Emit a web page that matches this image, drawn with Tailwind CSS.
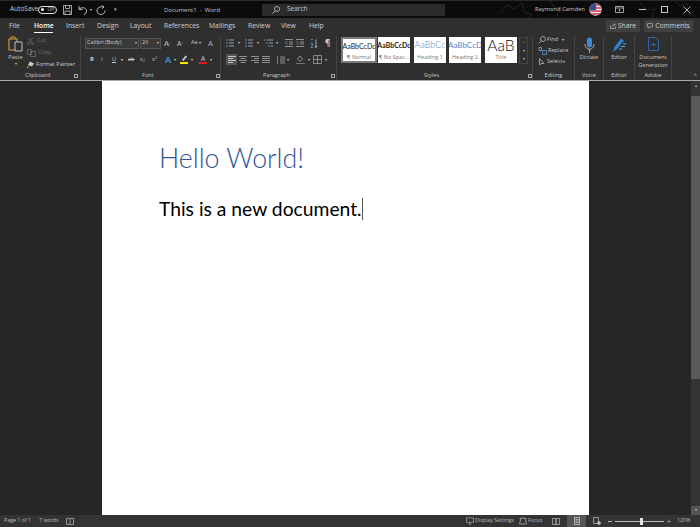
<!DOCTYPE html>
<html lang="en">
<head>
<meta charset="UTF-8">
<title>Document1 - Word</title>
<script src="https://cdn.jsdelivr.net/npm/@tailwindcss/browser@4"></script>
</head>
<body class="w-[700px] h-[527px] overflow-hidden bg-[#262626] font-['Open_Sans',sans-serif] text-[6.5px] leading-none text-[#c8c8c8]">
<div class="flex flex-col h-[527px]">

  <!-- Title bar -->
  <div class="relative isolate flex items-center h-[18px] bg-[#0b0b0b] border-t border-[#2a2a2a] shrink-0">
    <svg class="absolute -z-10 left-[490px] top-0" width="210" height="18" viewBox="0 0 210 18" fill="none" stroke="#242424" stroke-width="1"><path d="M10 12l8-8 6 4 8-6 2 9 8 3-6 6M60 0l4 6 8 1-5 6 1 5M150 2l6 7 9-1-3 8 4 2M185 0l5 5 8-2-2 8 9 5"/></svg>
    <span class="ml-[10px] w-[28px]">AutoSave</span>
    <div class="flex items-center justify-end w-[19px] h-[8px] rounded-full border border-[#e0e0e0] pr-[1px] gap-[1px]">
      <span class="w-[3px] h-[3px] rounded-full bg-white mr-[2px]"></span><span class="text-[4.5px] mr-[1px]">Off</span>
    </div>
    <svg class="ml-[6px]" width="9" height="10" viewBox="0 0 9 10" fill="none" stroke="#c8c8c8" stroke-width=".8"><path d="M.5.500h8v9h-8zM2.500.5v3h4v-3M2 9.500v-3.500h5v3.500"/></svg>
    <svg class="ml-[6px]" width="10" height="10" viewBox="0 0 10 10" fill="none" stroke="#c8c8c8" stroke-width=".9"><path d="M1 1v3.500h3.500M1.200 4.300c2-2.500 6.800-2 7.300 1.200.3 2-1 3.500-2.500 4"/></svg>
    <span class="ml-[2px] text-[4px]">▾</span>
    <svg class="ml-[4px]" width="10" height="10" viewBox="0 0 10 10" fill="none" stroke="#c8c8c8" stroke-width=".9"><path d="M6 .5l2 1.500-2 1.500M8 2C4 1 1 3 1 5.500 1 8 3 9.500 5 9.500S9 8 9 5.500"/></svg>
    <span class="ml-[8px] text-[5px]">▾</span>
    <span class="ml-[47px] w-[98px] text-[6px]">Document1 &nbsp;-&nbsp; Word</span>
    <div class="flex items-center h-[12px] w-[183px] bg-[#2b2b2b]">
      <svg class="ml-[10px]" width="8" height="8" viewBox="0 0 8 8" fill="none" stroke="#c8c8c8" stroke-width=".8"><circle cx="5" cy="3" r="2.500"/><path d="M3.200 4.800L.5 7.500"/></svg>
      <span class="ml-[7px]">Search</span>
    </div>
    <span class="ml-[90px] w-[54px] text-[5.800px] whitespace-nowrap">Raymond Camden</span>
    <svg width="13" height="13" viewBox="0 0 13 13"><defs><clipPath id="fc"><circle cx="6.500" cy="6.500" r="6.200"/></clipPath></defs><g clip-path="url(#fc)"><rect width="13" height="13" fill="#e9e9ee"/><path d="M0 2h13M0 5h13M0 8h13M0 11h13" stroke="#c8384a" stroke-width="1.300"/><rect width="7" height="7" fill="#34508f"/></g></svg>
    <svg class="ml-[13px]" width="9" height="7" viewBox="0 0 9 7" fill="none" stroke="#c8c8c8" stroke-width=".8"><path d="M.5.500h8v6h-8zM.5 2h8"/><path d="M4.500 5.500v-2M3.500 4.300l1-1 1 1"/></svg>
    <span class="ml-[15px] w-[7px] h-px bg-[#c8c8c8]"></span>
    <span class="ml-[15px] w-[7px] h-[7px] border border-[#c8c8c8]"></span>
    <svg class="ml-[15px]" width="8" height="8" viewBox="0 0 8 8" stroke="#d8d8d8" stroke-width=".8"><path d="M.5.500l7 7M7.500.500l-7 7"/></svg>
  </div>

  <!-- Tabs -->
  <div class="flex items-center h-[16px] bg-[#2f2f2f] shrink-0 relative text-[#d0d0d0] text-[6.800px]">
    <span class="ml-[9px] w-[25px]">File</span>
    <span class="relative w-[32px] text-white font-semibold">Home<span class="absolute left-0 top-[9px] w-[19px] h-[1px] bg-white"></span></span>
    <span class="w-[31px]">Insert</span>
    <span class="w-[33px]">Design</span>
    <span class="w-[34px]">Layout</span>
    <span class="w-[45px]">References</span>
    <span class="w-[39px]">Mailings</span>
    <span class="w-[33px]">Review</span>
    <span class="w-[28px]">View</span>
    <span class="w-[297px]">Help</span>
    <div class="flex items-center justify-center gap-[2px] w-[34px] h-[12px] bg-[#404040] rounded-[1px]">
      <svg width="6" height="6" viewBox="0 0 6 6" fill="none" stroke="#c8c8c8" stroke-width=".6"><path d="M.5 2.500v3h5v-2M2 4c.3-1.500 1.500-2.500 3-2.500M4 .5l1.300 1-1 1.200"/></svg>Share
    </div>
    <div class="flex items-center justify-center gap-[2px] w-[49px] h-[12px] ml-[4px] bg-[#404040] rounded-[1px]">
      <svg width="6" height="6" viewBox="0 0 6 6" fill="none" stroke="#c8c8c8" stroke-width=".6"><path d="M.5.500h5v3.500h-3l-1 1.200v-1.200h-1z"/></svg>Comments
    </div>
  </div>

  <!-- Ribbon -->
  <div class="flex h-[47px] bg-[#2f2f2f] border-b border-[#a8a8a8] pt-[2px] shrink-0 text-[5.600px]">

    <!-- Clipboard -->
    <div class="flex flex-col w-[81px] border-r border-[#444] pl-[8px]">
      <div class="flex h-[33px]">
        <div class="flex flex-col items-center w-[15px]">
          <svg width="15" height="16" viewBox="0 0 15 16" fill="none"><path d="M1 3h8v11H1z" stroke="#d99a3c" stroke-width="1.100"/><path d="M3 3V1h4v2" stroke="#d99a3c"/><path d="M7 6h7v9H7z" fill="#2f2f2f" stroke="#cfcfcf" stroke-width=".9"/></svg>
          <span class="mt-[3px]">Paste</span>
          <span class="text-[4px] mt-[1px]">▾</span>
        </div>
        <div class="flex flex-col ml-[4px] gap-[3px] pt-[1px]">
          <div class="flex items-center gap-[3px] h-[8px] text-[#6e6e6e]"><svg width="7" height="8" viewBox="0 0 7 8" fill="none" stroke="#777" stroke-width=".7"><path d="M1 .5l4 5M6 .5l-4 5"/><circle cx="1.500" cy="6.500" r="1"/><circle cx="5.500" cy="6.500" r="1"/></svg>Cut</div>
          <div class="flex items-center gap-[2px] h-[8px] mt-[1px] text-[#6e6e6e]"><svg width="9" height="8" viewBox="0 0 9 8" fill="none" stroke="#777" stroke-width=".7"><path d="M.5.500h4v5h-4zM3.500 2.500h5v5h-5z"/></svg>Copy</div>
          <div class="flex items-center gap-[1px] h-[9px] text-[#d0d0d0] whitespace-nowrap"><svg width="8" height="8" viewBox="0 0 8 8"><path d="M3 .5l4 2-2 3-4-1.500z" fill="#c8c8c8"/><path d="M1.500 4.500L.5 7.500" stroke="#d99a3c"/></svg>Format Painter</div>
        </div>
      </div>
      <div class="flex items-center h-[9px] mt-auto pl-[17px]"><span class="w-[49px]">Clipboard</span><span class="w-[4px] h-[4px] border border-[#aaa]"></span></div>
    </div>

    <!-- Font -->
    <div class="flex flex-col w-[140px] border-r border-[#444] pl-[4px]">
      <div class="flex items-center h-[14px] gap-[1px]">
        <div class="flex items-center justify-between w-[54px] h-[11px] bg-[#3a3a3a] border border-[#555] px-[1px]">Calibri (Body)<span class="text-[4px]">▾</span></div>
        <div class="flex items-center justify-between w-[21px] h-[11px] bg-[#3a3a3a] border border-[#555] px-[1px]">26<span class="text-[4px]">▾</span></div>
        <span class="ml-[2px] w-[11px] text-[8px] text-[#c8c8c8]">A<sup class="text-[3px] text-[#5b9bd5]">^</sup></span>
        <span class="ml-[1px] w-[10px] text-[7px]">A<sup class="text-[3px] text-[#5b9bd5]">˅</sup></span>
        <span class="ml-[3px] w-[14px]">Aa <span class="text-[4px]">▾</span></span>
        <span class="ml-[2px] text-[8px] text-[#b7a3c9]">A</span>
      </div>
      <div class="flex items-center h-[19px] pl-[5px] text-[#c8c8c8] font-bold">
        <span class="w-[11px]">B</span>
        <span class="w-[11px] italic font-normal">I</span>
        <span class="w-[9px] underline font-normal">U</span>
        <span class="w-[7px] text-[4px]">▾</span>
        <span class="w-[12px] line-through font-normal">ab</span>
        <span class="w-[12px] font-normal">x<sub class="text-[3.500px]">2</sub></span>
        <span class="w-[13px] font-normal">x<sup class="text-[3.500px]">2</sup></span>
        <span class="w-[9px] text-[9px] text-[#3f86d3]">A</span>
        <span class="w-[6px] text-[4px] font-normal">▾</span>
        <span class="flex flex-col items-center w-[8px] mr-[3px]"><svg width="8" height="7" viewBox="0 0 8 7"><path d="M2 5l3.500-4.500 1.500 1L3.500 6z" fill="#c8c8c8"/></svg><span class="w-[8px] h-[2px] bg-[#f2e500]"></span></span>
        <span class="w-[8px] text-[4px] font-normal">▾</span>
        <span class="flex flex-col items-center w-[8px] mr-[3px]"><span class="text-[7px] font-normal h-[7px]">A</span><span class="w-[8px] h-[2px] bg-[#e31b1b]"></span></span>
        <span class="text-[4px] font-normal">▾</span>
      </div>
      <div class="flex items-center h-[9px] mt-auto pl-[57px]"><span class="w-[74px]">Font</span><span class="w-[4px] h-[4px] border border-[#aaa]"></span></div>
    </div>

    <!-- Paragraph -->
    <div class="flex flex-col w-[116px] border-r border-[#444] pl-[5px]">
      <div class="flex items-center h-[14px] text-[4px]">
        <svg width="8" height="8" viewBox="0 0 8 8" stroke="#5b9bd5" stroke-width=".9"><path d="M0 1h2M0 4h2M0 7h2"/><path d="M3 1h5M3 4h5M3 7h5" stroke="#aaa"/></svg><span class="ml-[4px] w-[7px]">▾</span>
        <svg width="8" height="8" viewBox="0 0 8 8" stroke="#5b9bd5" stroke-width=".9"><path d="M0 1h2M0 4h2M0 7h2"/><path d="M3 1h5M3 4h5M3 7h5" stroke="#aaa"/></svg><span class="ml-[4px] w-[7px]">▾</span>
        <svg width="9" height="8" viewBox="0 0 9 8" stroke="#5b9bd5" stroke-width=".9"><path d="M0 1h2M2 4h2M4 7h2"/><path d="M3 1h6M5 4h4M7 7h2" stroke="#aaa"/></svg><span class="ml-[3px] w-[9px]">▾</span>
        <svg width="8" height="8" viewBox="0 0 8 8" fill="none" stroke="#aaa" stroke-width=".8"><path d="M0 .5h8M4 3h4M4 5h4M0 7.500h8"/><path d="M2.500 2.500L.5 4l2 1.500" stroke="#5b9bd5"/></svg>
        <svg class="ml-[3px]" width="8" height="8" viewBox="0 0 8 8" fill="none" stroke="#aaa" stroke-width=".8"><path d="M0 .5h8M4 3h4M4 5h4M0 7.500h8"/><path d="M.5 2.500L2.500 4l-2 1.500" stroke="#5b9bd5"/></svg>
        <svg class="ml-[5px]" width="9" height="9" viewBox="0 0 9 9" fill="none" stroke="#5b9bd5" stroke-width=".8"><path d="M2 .5h2M2 4h2M2 5.500h2L2 8.500h2"/><path d="M7 .5v8M5.500 7L7 8.500 8.500 7" stroke="#c8c8c8"/></svg>
        <span class="ml-[7px] text-[8px] font-bold">¶</span>
      </div>
      <div class="flex items-center h-[19px] text-[4px]">
        <span class="flex items-center justify-center w-[11px] h-[11px] bg-[#555]"><svg width="8" height="7" viewBox="0 0 8 7" stroke="#ddd" stroke-width=".8"><path d="M0 .5h8M0 2.500h5M0 4.500h8M0 6.500h5"/></svg></span>
        <svg class="ml-[2px]" width="8" height="7" viewBox="0 0 8 7" stroke="#aaa" stroke-width=".8"><path d="M0 .5h8M1.500 2.500h5M0 4.500h8M1.500 6.500h5"/></svg>
        <svg class="ml-[4px]" width="8" height="7" viewBox="0 0 8 7" stroke="#aaa" stroke-width=".8"><path d="M0 .5h8M3 2.500h5M0 4.500h8M3 6.500h5"/></svg>
        <svg class="ml-[3px]" width="8" height="7" viewBox="0 0 8 7" stroke="#aaa" stroke-width=".8"><path d="M0 .5h8M0 2.500h8M0 4.500h8M0 6.500h8"/></svg>
        <svg class="ml-[6px]" width="9" height="8" viewBox="0 0 9 8" stroke="#aaa" stroke-width=".8"><path d="M4 1h5M4 3h5M4 5h5M4 7h5"/><path d="M1.500 0v8" stroke="#5b9bd5"/></svg>
        <span class="ml-[2px] w-[8px]">▾</span>
        <svg class="ml-[1px]" width="9" height="9" viewBox="0 0 9 9" fill="none"><path d="M4 1L1.500 4 4 6.500 6.500 4z" stroke="#aaa" stroke-width=".8"/><path d="M0 8.500h9" stroke="#777"/></svg>
        <span class="ml-[3px] w-[5px]">▾</span>
        <svg width="9" height="9" viewBox="0 0 9 9" fill="none" stroke="#aaa" stroke-width=".7"><path d="M.5.500h8v8h-8zM4.500.5v8M.5 4.500h8"/></svg>
        <span class="ml-[3px]">▾</span>
      </div>
      <div class="flex items-center h-[9px] mt-auto pl-[37px]"><span class="w-[68px]">Paragraph</span><span class="w-[4px] h-[4px] border border-[#aaa]"></span></div>
    </div>

    <!-- Styles -->
    <div class="flex flex-col w-[196px] border-r border-[#444] pl-[4px]">
      <div class="flex h-[33px] text-[#7a7a7a] text-[5.500px] pt-[1px]">
        <div class="flex flex-col items-center w-[36px] h-[26px] bg-white border-2 border-[#7a7a7a] overflow-hidden whitespace-nowrap">
          <span class="h-[16px] pt-[4px] text-[#222] text-[7px] font-['Lato',sans-serif]">AaBbCcDc</span><span>¶ Normal</span>
        </div>
        <div class="flex flex-col items-center w-[32px] h-[26px] ml-[1px] bg-white overflow-hidden whitespace-nowrap">
          <span class="h-[18px] pt-[5px] text-[#222] text-[7px] font-['Lato',sans-serif] font-bold">AaBbCcDc</span><span>¶ No Spac...</span>
        </div>
        <div class="flex flex-col items-center w-[32px] h-[26px] ml-[4px] bg-white overflow-hidden whitespace-nowrap">
          <span class="h-[18px] pt-[3px] text-[#5b84c4] text-[9px] font-['Lato',sans-serif] font-light">AaBbCc</span><span>Heading 1</span>
        </div>
        <div class="flex flex-col items-center w-[32px] h-[26px] ml-[3px] bg-white overflow-hidden whitespace-nowrap">
          <span class="h-[18px] pt-[4px] text-[#5b84c4] text-[8px] font-['Lato',sans-serif]">AaBbCcD</span><span>Heading 2</span>
        </div>
        <div class="flex flex-col items-center w-[32px] h-[26px] ml-[4px] bg-white whitespace-nowrap">
          <span class="h-[18px] pt-[1px] text-[#111] text-[15.500px] font-['Lato',sans-serif] font-light">AaB</span><span>Title</span>
        </div>
        <div class="flex flex-col items-center w-[9px] h-[27px] ml-[2px] text-[#bbb] text-[4px] border border-[#444]">
          <span class="h-[9px] pt-[2px] text-[#666]">▴</span><span class="h-[9px] pt-[2px]">▾</span><span class="h-[8px] pt-[2px]">▾</span>
        </div>
      </div>
      <div class="flex items-center h-[9px] mt-auto pl-[83px]"><span class="w-[104px]">Styles</span><span class="w-[4px] h-[4px] border border-[#aaa]"></span></div>
    </div>

    <!-- Editing -->
    <div class="flex flex-col w-[42px] border-r border-[#444] pl-[5px]">
      <div class="flex flex-col h-[33px] gap-[3px]">
        <div class="flex items-center gap-[1px] h-[8px]"><svg width="8" height="8" viewBox="0 0 8 8" fill="none" stroke="#c8c8c8" stroke-width=".7"><circle cx="5" cy="3" r="2.500"/><path d="M3.200 4.800L.5 7.500"/></svg>Find <span class="ml-[3px] text-[4px]">▾</span></div>
        <div class="flex items-center gap-[1px] h-[8px]"><svg width="9" height="8" viewBox="0 0 9 8" fill="none" stroke-width=".8"><path d="M1 .5v3h2.500v-3z" stroke="#b98fc9"/><path d="M4.500 3.500h4v4h-4z" stroke="#5b9bd5"/></svg>Replace</div>
        <div class="flex items-center gap-[1px] h-[8px]"><svg width="8" height="8" viewBox="0 0 8 8" fill="none" stroke="#c8c8c8" stroke-width=".7"><path d="M1.500.5v6.500l1.500-1.500h3z"/></svg>Select<span class="text-[4px]">▾</span></div>
      </div>
      <div class="flex items-center justify-center h-[9px] mt-auto pr-[5px]">Editing</div>
    </div>

    <!-- Voice -->
    <div class="flex flex-col w-[29px] border-r border-[#444]">
      <div class="flex flex-col items-center h-[33px]">
        <svg class="mt-[1px]" width="11" height="16" viewBox="0 0 11 16" fill="none"><rect x="3" y=".5" width="5" height="10" rx="2.500" fill="#3f86d3"/><path d="M1 7c0 7 9 7 9 0M5.500 12v4" stroke="#c8c8c8" stroke-width=".8"/></svg>
        <span class="mt-[2px]">Dictate</span>
      </div>
      <div class="flex items-center justify-center h-[9px] mt-auto">Voice</div>
    </div>

    <!-- Editor -->
    <div class="flex flex-col w-[31px] border-r border-[#444]">
      <div class="flex flex-col items-center h-[33px]">
        <svg class="mt-[1px]" width="16" height="16" viewBox="0 0 16 16" fill="none"><path d="M2 15l1.500-5L10 1.500l3 2L6 12z" fill="#2f7fd1"/><path d="M8 12h3M10 9.500h4M12 7h3" stroke="#5ba6e8" stroke-width="1.200"/></svg>
        <span class="mt-[2px]">Editor</span>
      </div>
      <div class="flex items-center justify-center h-[9px] mt-auto">Editor</div>
    </div>

    <!-- Adobe -->
    <div class="flex flex-col w-[37px] border-r border-[#444]">
      <div class="flex flex-col items-center h-[33px]">
        <svg class="mt-[1px]" width="11" height="14" viewBox="0 0 11 14" fill="none" stroke="#2f6fb8" stroke-width=".9"><path d="M.5.500h7l3 3v10h-10z"/><path d="M2.500 7.500h6M5.500 5.500v4"/></svg>
        <span class="mt-[2px] text-center leading-[8px]">Document<br>Generation</span>
      </div>
      <div class="flex items-center justify-center h-[9px] mt-auto">Adobe</div>
    </div>

    <div class="flex flex-1 items-end justify-end pr-[3px] pb-[2px] text-[6px]">^</div>
  </div>

  <!-- Document area -->
  <div class="flex flex-1 min-h-0">
    <div class="w-[102px]"></div>
    <div class="w-[487px] bg-white pl-[57px] pt-[60px] font-['Lato',sans-serif]">
      <div class="text-[26.800px] leading-[34px] font-light text-[#2f5496] whitespace-nowrap">Hello World!</div>
      <div class="flex items-center mt-[22px] text-[19.300px] leading-[24px] text-black whitespace-nowrap">This is a new document.<span class="w-px h-[22px] bg-[#555]"></span></div>
    </div>
    <div class="w-[102px]"></div>
    <div class="flex flex-col w-[9px] bg-[#333] text-[4px] text-center">
      <span class="h-[15px] pt-[3px]">▴</span>
      <div class="h-[283px] bg-[#5a5a5a]"></div>
      <div class="flex-1"></div>
      <span class="h-[9px] bg-[#555] pt-[2px]">▾</span>
    </div>
  </div>

  <!-- Status bar -->
  <div class="flex items-center h-[12px] bg-[#333] shrink-0 text-[5.300px] text-[#bdbdbd]">
    <span class="ml-[4px] w-[35px]">Page 1 of 1</span>
    <span class="w-[27px]">7 words</span>
    <svg width="8" height="7" viewBox="0 0 8 7" fill="none" stroke="#bdbdbd" stroke-width=".7"><path d="M.5.500h3l.5.500.5-.5h3v6h-3l-.5.300-.5-.3h-3zM4 1v5.500"/></svg>
    <svg class="ml-[392px]" width="8" height="8" viewBox="0 0 9 8" fill="none" stroke="#bdbdbd" stroke-width=".7"><path d="M.5.500h8v5h-8zM3 7.500h3M4.500 5.500v2"/></svg>
    <span class="ml-[1px] w-[44px]">Display Settings</span>
    <svg width="8" height="8" viewBox="0 0 8 8" fill="none" stroke="#bdbdbd" stroke-width=".7"><path d="M2 1h4l1.500 6h-7z"/><path d="M.5 1l1 1M7.500 1l-1 1"/></svg>
    <span class="ml-[1px] w-[24px]">Focus</span>
    <svg width="8" height="7" viewBox="0 0 8 7" fill="none" stroke="#bdbdbd" stroke-width=".7"><path d="M.5.500h3.500v6h-3.500zM4 .5h3.500v6H4z"/></svg>
    <span class="flex items-center justify-center ml-[7px] w-[19px] h-[12px] bg-[#555]"><svg width="6" height="8" viewBox="0 0 6 8" fill="none" stroke="#ddd" stroke-width=".7"><path d="M.5.500h5v7h-5zM1.500 2.500h3M1.500 4h3M1.500 5.500h3"/></svg></span>
    <svg class="ml-[7px]" width="8" height="8" viewBox="0 0 8 8" fill="none" stroke="#bdbdbd" stroke-width=".7"><path d="M.5.500h5v6h-5z"/><circle cx="6" cy="6" r="1.500" fill="#bdbdbd"/></svg>
    <span class="ml-[7px] w-[4px] h-px bg-[#bdbdbd]"></span>
    <span class="relative ml-[3px] w-[49px] h-px bg-[#bdbdbd]"><span class="absolute left-[25px] -top-[3px] w-[3px] h-[7px] bg-[#e6e6e6]"></span></span>
    <span class="ml-[3px] w-[4px] text-[7px]">+</span>
    <span class="ml-[6px]">120%</span>
  </div>
</div>
</body>
</html>
